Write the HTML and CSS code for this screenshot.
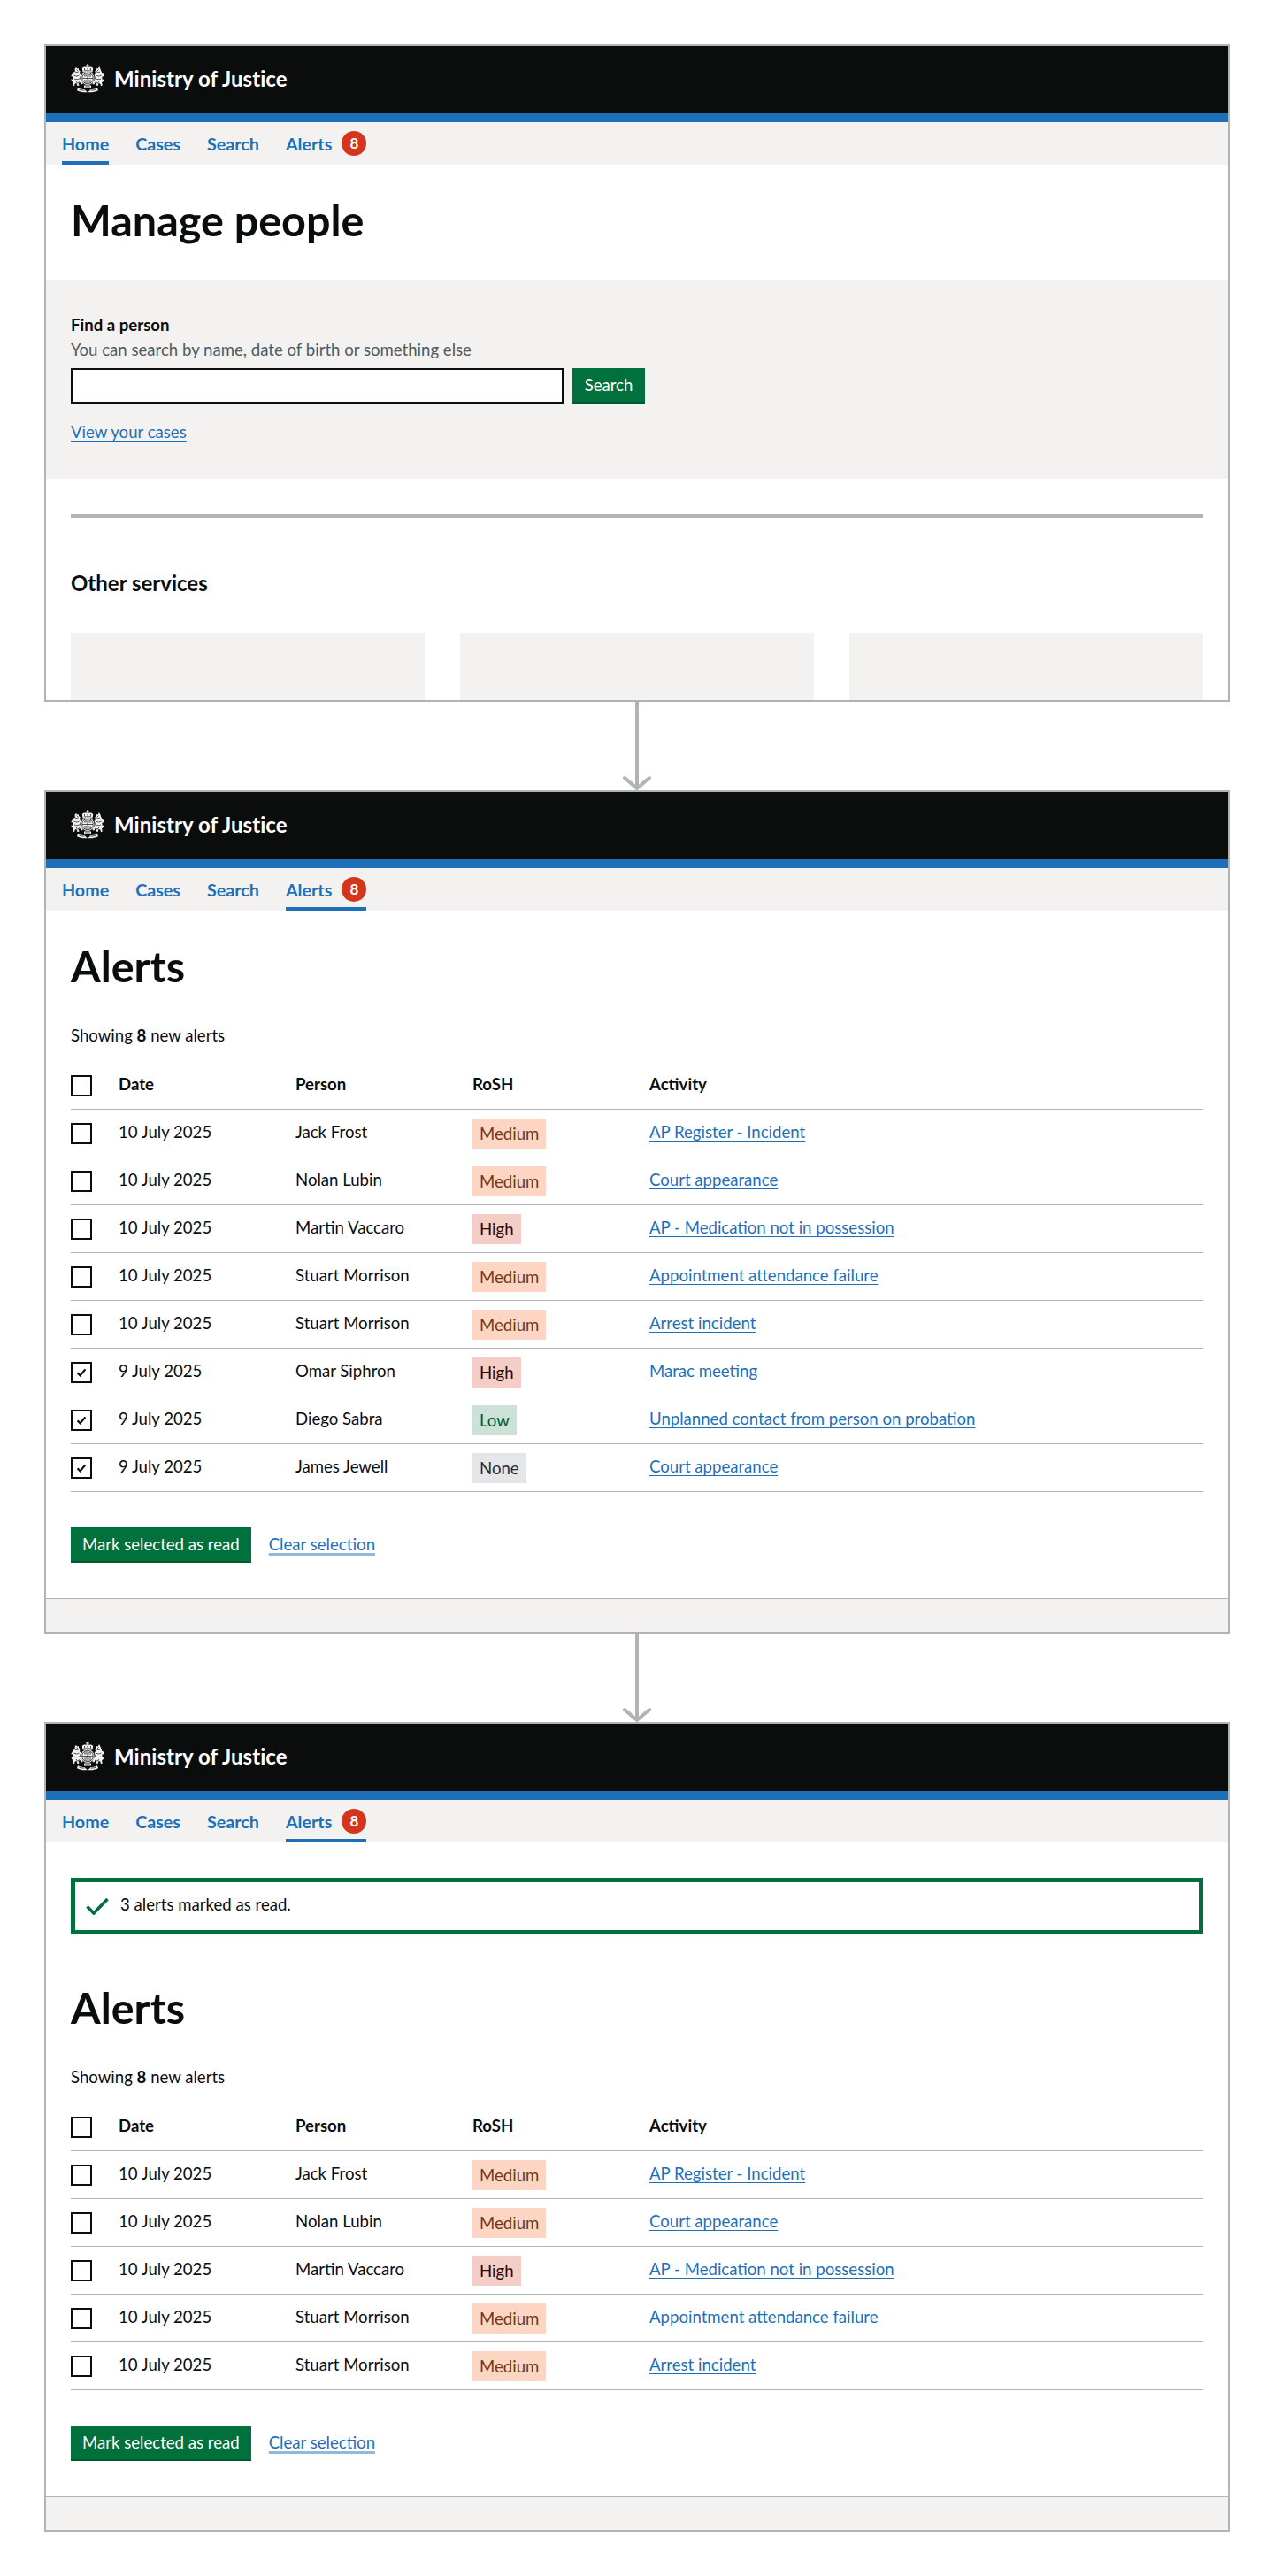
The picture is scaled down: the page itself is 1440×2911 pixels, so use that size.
FILE: index.html
```html
<!DOCTYPE html>
<html lang="en">
<head>
<meta charset="utf-8">
<title>Alerts flow</title>
<link rel="stylesheet" href="styles.css">
</head>
<body>
<svg class="defs" width="0" height="0" aria-hidden="true">
  <symbol id="crest" viewBox="0 0 38 34">
    <g fill="#f2f2f2">
      <path d="M18.400 0h1.200v1.200h1.200v1.200h-1.200v1.200h-1.200V2.400h-1.200V1.200h1.200z"/>
      <path d="M13.600 9.400 12.800 5.200c1.400-1.500 3-1.800 4.200-1.500l2-.7 2 .7c1.200-.3 2.800 0 4.200 1.500l-.8 4.200z"/>
      <path d="M4.600 5.600 6 4l1.200 1.400 1.600-.4.200 2 1.800 1.600-1 2 1.600 2.400-1 2 .4 3 1.600 1.600 1.200 3.400-1.800.4-1.600-2.600-1.600 1.600 1 2.400-2.200.2-1-3.200-1.800 1-.6 2.400-1.800-.6.800-3.400-2-1.400-.6-2.800 1.800 1.200.6-3.400-2.600-.8L3 9.600l1.800-.6z"/>
      <path d="M33.400 5.600 32 3l-1.200 2.400-1.600-.4-.2 2-1.800 1.600 1 2-1.600 2.400 1 2-.4 3-1.600 1.600-1.200 3.400 1.800.4 1.600-2.600 1.600 1.600-1 2 2.200.6 1-3.200 1.800 1 .6 2.400 1.800-.6-.8-3.400 2-1.400.6-2.800-1.800 1.200-.6-3.400 2.600-.8-.6-2.400-1.800-.6z"/>
      <circle cx="19" cy="16.500" r="7.600"/>
      <path d="M8 27.200c3 1.600 6 1.800 7.400 1.800l3.600 3.400 3.600-3.400c1.400 0 4.400-.2 7.400-1.800l1 3c-3.400 1.600-6.400 2-8 2H15c-1.600 0-4.600-.4-8-2z"/>
      <path d="M15 24.500h8v3h-8z"/>
    </g>
    <g fill="none" stroke="#0b0c0c" stroke-width=".7">
      <path d="M5 9c1.500 1 3 .5 4-.5M3.500 13c2 1.500 4.500 1 6 0M4 17c2 1 4 1 6.500-.5M6 20l1.500 2 2.500-1.500M6.500 6.500 8 8"/>
      <path d="M33 9c-1.500 1-3 .5-4-.5M34.500 13c-2 1.500-4.500 1-6 0M34 17c-2 1-4 1-6.500-.5M32 20l-1.500 2-2.500-1.500M31.500 6.500 30 8"/>
      <circle cx="19" cy="16.500" r="6.300"/>
      <path d="M14.800 7.800h8.400M15.500 5v2M19 4.800v2M22.500 5v2"/>
      <path d="M19 10.500v12M13 16.500h12M15 12h3M15 13.800h3M20.200 12.200h2.800M20.200 14h2.800M15 19h3M15 21h3M20.200 19h2.800M20.200 21h2.800"/>
      <path d="M9.500 29.200c2 .6 4 .9 6 .9M28.500 29.200c-2 .6-4 .9-6 .9M16.200 26h5.600"/>
    </g>
  </symbol>
  <symbol id="tick" viewBox="0 0 12 12">
    <path d="M1.600 6.400 4.600 9.400 10.400 2.400" fill="none" stroke="#0b0c0c" stroke-width="2.200"/>
  </symbol>
  <symbol id="arrow" viewBox="0 0 32 100">
    <path d="M16 0V98M2 86 16 98 30 86" fill="none" stroke="#b1b4b6" stroke-width="4" stroke-linecap="round"/>
  </symbol>
</svg>

<main class="page">

  <section class="frame frame-home">
    <header class="site-header">
      <svg class="crest"><use href="#crest"/></svg>
      <span class="org">Ministry of Justice</span>
    </header>
    <nav class="nav">
      <a class="nav-item active">Home</a>
      <a class="nav-item">Cases</a>
      <a class="nav-item">Search</a>
      <a class="nav-item">Alerts <span class="count">8</span></a>
    </nav>
    <div class="content">
      <h1 class="title">Manage people</h1>
    </div>
    <div class="search-panel">
      <div class="search-label">Find a person</div>
      <div class="search-hint">You can search by name, date of birth or something else</div>
      <div class="search-row">
        <div class="search-input"></div>
        <button class="btn search-btn"><span class="btn-text">Search</span></button>
      </div>
      <a class="link cases-link">View your cases</a>
    </div>
    <div class="services">
      <hr class="rule">
      <h2 class="subtitle">Other services</h2>
      <div class="cards">
        <div class="card"></div>
        <div class="card"></div>
        <div class="card"></div>
      </div>
    </div>
  </section>

  <svg class="arrow"><use href="#arrow"/></svg>

  <section class="frame">
    <header class="site-header">
      <svg class="crest"><use href="#crest"/></svg>
      <span class="org">Ministry of Justice</span>
    </header>
    <nav class="nav">
      <a class="nav-item">Home</a>
      <a class="nav-item">Cases</a>
      <a class="nav-item">Search</a>
      <a class="nav-item active">Alerts <span class="count">8</span></a>
    </nav>
    <div class="content">
      <h1 class="title">Alerts</h1>
      <p class="summary">Showing <b>8</b> new alerts</p>
      <table class="alerts">
        <thead>
          <tr><th><span class="check"></span></th><th>Date</th><th>Person</th><th>RoSH</th><th>Activity</th></tr>
        </thead>
        <tbody>
          <tr><td><span class="check"></span></td><td>10 July 2025</td><td>Jack Frost</td><td><span class="tag medium">Medium</span></td><td><a class="link">AP Register - Incident</a></td></tr>
          <tr><td><span class="check"></span></td><td>10 July 2025</td><td>Nolan Lubin</td><td><span class="tag medium">Medium</span></td><td><a class="link">Court appearance</a></td></tr>
          <tr><td><span class="check"></span></td><td>10 July 2025</td><td>Martin Vaccaro</td><td><span class="tag high">High</span></td><td><a class="link">AP - Medication not in possession</a></td></tr>
          <tr><td><span class="check"></span></td><td>10 July 2025</td><td>Stuart Morrison</td><td><span class="tag medium">Medium</span></td><td><a class="link">Appointment attendance failure</a></td></tr>
          <tr><td><span class="check"></span></td><td>10 July 2025</td><td>Stuart Morrison</td><td><span class="tag medium">Medium</span></td><td><a class="link">Arrest incident</a></td></tr>
          <tr><td><span class="check"><svg class="tick"><use href="#tick"/></svg></span></td><td>9 July 2025</td><td>Omar Siphron</td><td><span class="tag high">High</span></td><td><a class="link">Marac meeting</a></td></tr>
          <tr><td><span class="check"><svg class="tick"><use href="#tick"/></svg></span></td><td>9 July 2025</td><td>Diego Sabra</td><td><span class="tag low">Low</span></td><td><a class="link">Unplanned contact from person on probation</a></td></tr>
          <tr><td><span class="check"><svg class="tick"><use href="#tick"/></svg></span></td><td>9 July 2025</td><td>James Jewell</td><td><span class="tag none">None</span></td><td><a class="link">Court appearance</a></td></tr>
        </tbody>
      </table>
      <div class="actions">
        <button class="btn"><span class="btn-text">Mark selected as read</span></button>
        <a class="link clear">Clear selection</a>
      </div>
    </div>
    <footer class="foot"></footer>
  </section>

  <svg class="arrow"><use href="#arrow"/></svg>

  <section class="frame">
    <header class="site-header">
      <svg class="crest"><use href="#crest"/></svg>
      <span class="org">Ministry of Justice</span>
    </header>
    <nav class="nav">
      <a class="nav-item">Home</a>
      <a class="nav-item">Cases</a>
      <a class="nav-item">Search</a>
      <a class="nav-item active">Alerts <span class="count">8</span></a>
    </nav>
    <div class="content">
      <div class="flash">
        <svg class="flash-icon" viewBox="0 0 26 20"><path d="M1.500 10.500 9 18 24.500 2" fill="none" stroke="#00703c" stroke-width="3.600"/></svg>
        <span class="flash-text">3 alerts marked as read.</span>
      </div>
      <h1 class="title">Alerts</h1>
      <p class="summary">Showing <b>8</b> new alerts</p>
      <table class="alerts">
        <thead>
          <tr><th><span class="check"></span></th><th>Date</th><th>Person</th><th>RoSH</th><th>Activity</th></tr>
        </thead>
        <tbody>
          <tr><td><span class="check"></span></td><td>10 July 2025</td><td>Jack Frost</td><td><span class="tag medium">Medium</span></td><td><a class="link">AP Register - Incident</a></td></tr>
          <tr><td><span class="check"></span></td><td>10 July 2025</td><td>Nolan Lubin</td><td><span class="tag medium">Medium</span></td><td><a class="link">Court appearance</a></td></tr>
          <tr><td><span class="check"></span></td><td>10 July 2025</td><td>Martin Vaccaro</td><td><span class="tag high">High</span></td><td><a class="link">AP - Medication not in possession</a></td></tr>
          <tr><td><span class="check"></span></td><td>10 July 2025</td><td>Stuart Morrison</td><td><span class="tag medium">Medium</span></td><td><a class="link">Appointment attendance failure</a></td></tr>
          <tr><td><span class="check"></span></td><td>10 July 2025</td><td>Stuart Morrison</td><td><span class="tag medium">Medium</span></td><td><a class="link">Arrest incident</a></td></tr>
        </tbody>
      </table>
      <div class="actions">
        <button class="btn"><span class="btn-text">Mark selected as read</span></button>
        <a class="link clear">Clear selection</a>
      </div>
    </div>
    <footer class="foot"></footer>
  </section>

</main>
</body>
</html>
```

FILE: styles.css
```css
* { box-sizing: border-box; }

html, body { margin: 0; background: #fff; }

body {
  font-family: Lato, "Noto Sans", sans-serif;
  font-size: 18.6px;
  line-height: 25px;
  color: #0b0c0c;
}

.defs { position: absolute; }

.page {
  display: flex;
  flex-direction: column;
  align-items: center;
  padding: 50px 50px 0;
}

.frame {
  width: 100%;
  border: 2px solid #b1b4b6;
  background: #fff;
}

.frame-home {
  height: 743px;
  overflow: hidden;
}

.arrow {
  display: block;
  width: 32px;
  height: 100px;
  flex: none;
}

.site-header {
  height: 86px;
  padding: 0 28px 3px;
  background: #0b0c0c;
  border-bottom: 10px solid #1d70b8;
  display: flex;
  align-items: center;
  gap: 11px;
}

.crest { width: 38px; height: 34px; flex: none; }

.org {
  color: #fff;
  font-size: 24px;
  font-weight: 700;
  letter-spacing: .05px;
}

.nav {
  height: 48px;
  padding: 0 18px;
  background: #f3f2f1;
  display: flex;
  gap: 30px;
}

.nav-item {
  display: flex;
  align-items: center;
  gap: 11px;
  height: 48px;
  color: #1d70b8;
  font-size: 19.7px;
  font-weight: 700;
}

.nav-item.active { box-shadow: inset 0 -4px #1d70b8; }

.count {
  width: 28px;
  height: 28px;
  border-radius: 50%;
  background: #d4351c;
  color: #fff;
  font-size: 17px;
  font-weight: 700;
  line-height: 28px;
  text-align: center;
}

.content { padding: 40px 28px 40px; }

.title {
  margin: 0 0 46px;
  font-size: 48.5px;
  line-height: 44px;
  font-weight: 700;
}

.frame-home .title { margin-bottom: 6px; }

.search-panel {
  height: 225px;
  padding: 39px 28px 0;
  background: #f3f2f1;
}

.search-label { font-weight: 700; line-height: 25px; }

.search-hint { color: #505a5f; line-height: 31px; }

.search-row {
  display: flex;
  gap: 10px;
  margin: 5px 0 20px;
}

.search-input {
  width: 557px;
  height: 40px;
  border: 2px solid #0b0c0c;
  background: #fff;
}

.btn {
  height: 40px;
  padding: 0 13px;
  border: 0;
  background: #00703c;
  box-shadow: inset 0 -2px #005a30;
  color: #fff;
  font: inherit;
}

.btn-text { position: relative; top: -1px; }

.search-btn { width: 82px; padding: 0; }

.link {
  color: #1d70b8;
  text-decoration: underline;
  text-decoration-thickness: 1px;
  text-underline-offset: 3px;
}

.services { padding: 40px 28px 0; }

.rule {
  height: 4px;
  margin: 0;
  border: 0;
  background: #b1b4b6;
}

.subtitle {
  margin: 59px 0 41px;
  font-size: 24px;
  line-height: 30px;
  font-weight: 700;
}

.cards {
  display: grid;
  grid-template-columns: repeat(3, 1fr);
  gap: 40px;
}

.card { height: 200px; background: #f3f2f1; }

.summary { margin: -1px 0 17px; }

.alerts {
  width: 100%;
  table-layout: fixed;
  border-collapse: separate;
  border-spacing: 0;
}

.alerts th, .alerts td {
  height: 54px;
  padding: 0;
  border-bottom: 1px solid #b1b4b6;
  text-align: left;
  vertical-align: middle;
}

.alerts th:not(:first-child),
.alerts td:nth-child(2),
.alerts td:nth-child(3),
.alerts td:nth-child(5) { padding-bottom: 2px; }

.alerts th { font-weight: 700; }

.alerts th:first-child { width: 54px; }
.alerts th:nth-child(2), .alerts th:nth-child(3), .alerts th:nth-child(4) { width: 200px; }

.check {
  display: flex;
  align-items: center;
  justify-content: center;
  width: 24px;
  height: 24px;
  border: 2px solid #0b0c0c;
  background: #fff;
}

.tick { width: 12px; height: 12px; }

.tag {
  display: inline-block;
  height: 34px;
  padding: 0 8px;
  line-height: 34px;
  vertical-align: middle;
}

.medium { background: #fcd6c3; color: #6e3619; }
.high { background: #f4cdc6; color: #2a0b06; }
.low { background: #cce2d8; color: #005a30; }
.none { background: #e5e6e7; color: #282d30; }

.actions {
  display: flex;
  align-items: center;
  gap: 20px;
  margin-top: 40px;
}

.clear {
  margin-bottom: 2px;
  text-decoration-color: #8eb8dc;
  text-decoration-thickness: 3px;
}

.foot {
  height: 38px;
  background: #f3f2f1;
  border-top: 1px solid #b1b4b6;
}

.flash {
  display: flex;
  align-items: center;
  gap: 13px;
  height: 64px;
  margin-bottom: 60px;
  padding: 0 12px;
  border: 5px solid #00703c;
}

.flash-icon { width: 26px; height: 20px; flex: none; }

.flash-text { margin-bottom: 3px; }
```
